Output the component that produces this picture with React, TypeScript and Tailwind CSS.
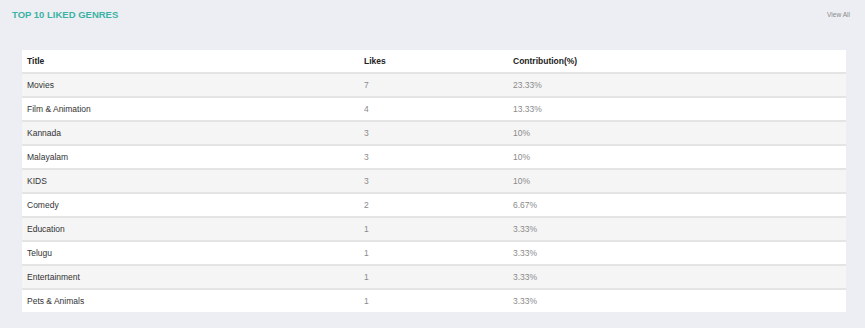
import React from "react";

interface Genre {
  title: string;
  likes: number;
  share: string;
}

const genres: Genre[] = [
  { title: "Movies", likes: 7, share: "23.33%" },
  { title: "Film & Animation", likes: 4, share: "13.33%" },
  { title: "Kannada", likes: 3, share: "10%" },
  { title: "Malayalam", likes: 3, share: "10%" },
  { title: "KIDS", likes: 3, share: "10%" },
  { title: "Comedy", likes: 2, share: "6.67%" },
  { title: "Education", likes: 1, share: "3.33%" },
  { title: "Telugu", likes: 1, share: "3.33%" },
  { title: "Entertainment", likes: 1, share: "3.33%" },
  { title: "Pets & Animals", likes: 1, share: "3.33%" },
];

const App: React.FC = () => {
  return (
    <div className="h-[328px] w-full bg-[#edeef3] font-['Liberation_Sans',Arial,sans-serif]">
      {/* header strip */}
      <div className="flex items-center justify-between pl-[12px] pr-[15px] pt-[9px]">
        <h2 className="text-[9.5px] font-bold uppercase leading-[12px] text-[#3ab3a4]">
          Top 10 Liked Genres
        </h2>
        <a className="text-[6.6px] leading-[12px] text-[#8a8a8a]">View All</a>
      </div>

      <div className="ml-[22px] mr-[19px] mt-[29px]">
        <div className="grid h-[22px] grid-cols-[337px_149px_1fr] items-center bg-white text-[8.5px] font-bold text-[#222]">
          <div className="pl-[5px]">Title</div>
          <div className="pl-[5px]">Likes</div>
          <div className="pl-[5px]">Contribution(%)</div>
        </div>
        {genres.map((g, i) => (
          <div
            key={g.title}
            className={`grid h-[24px] grid-cols-[337px_149px_1fr] items-center border-t-2 border-[#e4e4e4] text-[8.5px] ${
              i % 2 === 0 ? "bg-[#f5f5f5]" : "bg-white"
            }`}
          >
            <div className="pl-[5px] text-[#333]">{g.title}</div>
            <div className="pl-[5px] text-[#8a8a8a]">{g.likes}</div>
            <div className="pl-[5px] text-[#8a8a8a]">{g.share}</div>
          </div>
        ))}
      </div>
    </div>
  );
};

export default App;
